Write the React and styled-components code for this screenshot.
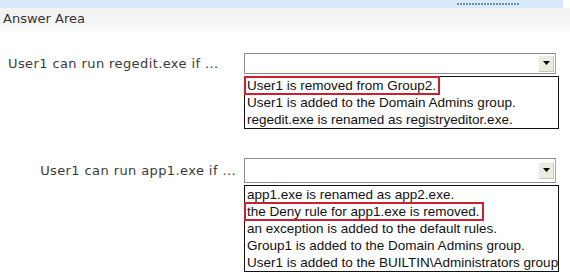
import styled, { createGlobalStyle } from 'styled-components';

const GlobalStyle = createGlobalStyle`
  body {
    margin: 0;
    background: #fff;
  }
`;

const Page = styled.div`
  width: 570px;
  height: 280px;
  overflow: hidden;
  background: #fff;
  font-family: "DejaVu Sans", Verdana, sans-serif;
  color: #333;
`;

const TopBar = styled.div`
  width: 563px;
  height: 8px;
  background: #d8e8f7;
  display: flex;
  justify-content: flex-end;
  align-items: center;
  padding-right: 43px;
  box-sizing: border-box;
`;

const Dots = styled.div`
  width: 63px;
  height: 2px;
  background: repeating-linear-gradient(90deg, #6b8fc4 0 2px, transparent 2px 3px);
`;

const Header = styled.div`
  height: 26px;
  box-sizing: border-box;
  padding: 3px 0 0 3px;
  font-size: 13px;
  background: linear-gradient(#f1f1f1, #f6f6f6 70%, #fff);
`;

const Rows = styled.div`
  display: flex;
  flex-direction: column;
`;

const Row = styled.div`
  display: grid;
  grid-template-columns: 244px 315px;
  margin-top: ${({ gap }) => gap}px;
`;

const Label = styled.div`
  height: ${({ h }) => h}px;
  display: flex;
  align-items: center;
  justify-content: ${({ right }) => (right ? 'flex-end' : 'flex-start')};
  padding: ${({ right }) => (right ? '0 8px 0 0' : '0 0 0 8px')};
  font-size: 13px;
  letter-spacing: 0.4px;
  color: #3a3a3a;
  white-space: nowrap;
`;

const Field = styled.div`
  display: flex;
  flex-direction: column;
`;

const Select = styled.div`
  width: 312px;
  height: ${({ h }) => h}px;
  box-sizing: border-box;
  border: 1px solid #8c8c8c;
  border-right-color: #a8a8a8;
  background: #fff;
  display: flex;
  justify-content: flex-end;
  align-items: center;
  padding-right: 1px;
`;

const ArrowButton = styled.div`
  width: 15px;
  height: 16px;
  box-sizing: border-box;
  background: #ecebe0;
  border-right: 1px solid #c9c8bc;
  border-bottom: 1px solid #c9c8bc;
  display: flex;
  align-items: center;
  justify-content: center;
`;

const List = styled.div`
  width: 315px;
  box-sizing: border-box;
  margin-top: 2px;
  border: 1px solid #111;
  background: #fff;
`;

const Item = styled.div`
  width: fit-content;
  height: 17px;
  line-height: 17px;
  box-sizing: border-box;
  padding: 0 3px 0 2px;
  font-family: "Liberation Sans", Arial, sans-serif;
  font-size: 13.5px;
  color: #111;
  white-space: nowrap;
  ${({ marked }) => marked && 'outline: 2px solid #cc2030; outline-offset: -1px;'}
`;

const Arrow = () => (
  <svg width="7" height="4" viewBox="0 0 7 4">
    <path d="M0 0 H7 L3.5 4 Z" fill="#000" />
  </svg>
);

const questions = [
  {
    label: 'User1 can run regedit.exe if ...',
    right: false,
    gap: 19,
    h: 21,
    options: [
      'User1 is removed from Group2.',
      'User1 is added to the Domain Admins group.',
      'regedit.exe is renamed as registryeditor.exe.',
    ],
    answer: 0,
  },
  {
    label: 'User1 can run app1.exe if ...',
    right: true,
    gap: 29,
    h: 25,
    options: [
      'app1.exe is renamed as app2.exe.',
      'the Deny rule for app1.exe is removed.',
      'an exception is added to the default rules.',
      'Group1 is added to the Domain Admins group.',
      'User1 is added to the BUILTIN\\Administrators group',
    ],
    answer: 1,
  },
];

export default function App() {
  return (
    <Page>
      <GlobalStyle />
      <TopBar>
        <Dots />
      </TopBar>
      <Header>Answer Area</Header>
      <Rows>
        {questions.map((q) => (
          <Row key={q.label} gap={q.gap}>
            <Label right={q.right} h={q.h}>{q.label}</Label>
            <Field>
              <Select h={q.h}>
                <ArrowButton>
                  <Arrow />
                </ArrowButton>
              </Select>
              <List>
                {q.options.map((opt, i) => (
                  <Item key={opt} marked={i === q.answer}>{opt}</Item>
                ))}
              </List>
            </Field>
          </Row>
        ))}
      </Rows>
    </Page>
  );
}
